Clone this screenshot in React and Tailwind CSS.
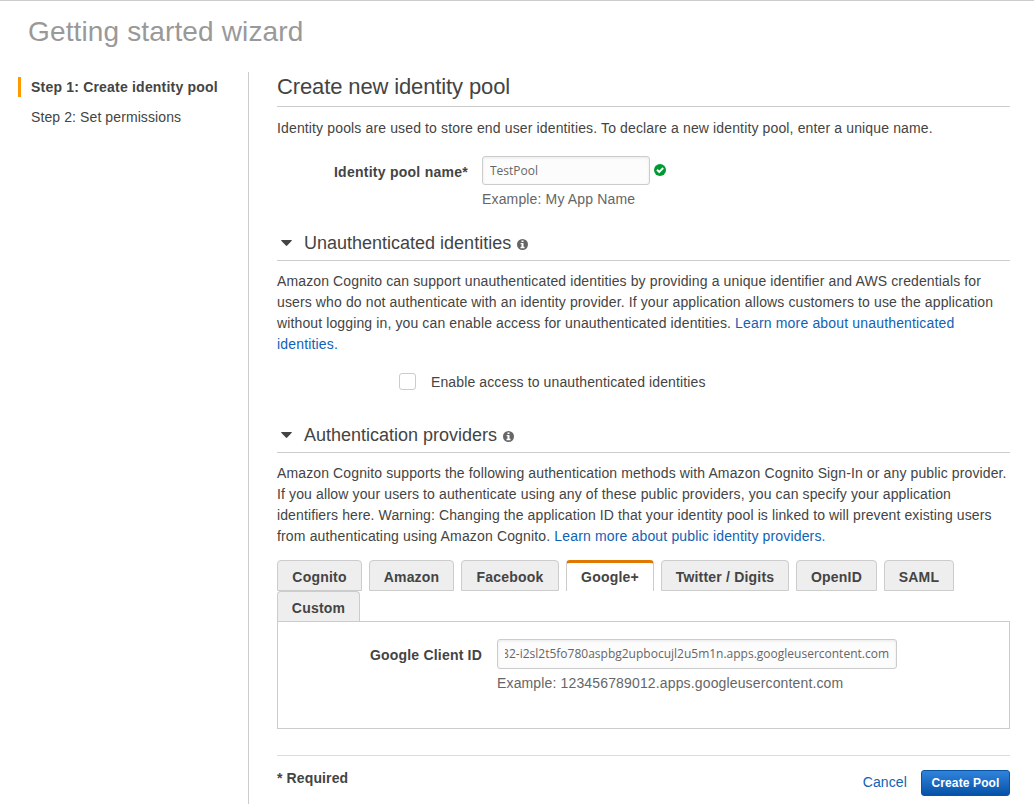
import React from 'react';

const TABS = [
  { label: 'Cognito', width: 'w-[85px]' },
  { label: 'Amazon', width: 'w-[85px]' },
  { label: 'Facebook', width: 'w-[98px]' },
  { label: 'Google+', width: 'w-[88px]', active: true },
  { label: 'Twitter / Digits', width: 'w-[128px]' },
  { label: 'OpenID', width: 'w-[81px]' },
  { label: 'SAML', width: 'w-[70px]' },
];

function InfoIcon() {
  return (
    <svg className="mt-[3px] ml-[6px] size-[11px]" viewBox="0 0 11 11">
      <circle cx="5.5" cy="5.5" r="5.5" fill="#666" />
      <path d="M4.5 1.4h2v1.7h-2zM3.6 4h2.9v3.8h1v1.4H3.5V7.8h1V5.3h-.9z" fill="#fff" />
    </svg>
  );
}

function SectionHeading({ children }) {
  return (
    <h3 className="flex h-[36px] items-center border-b border-[#ccc] text-[18px]">
      <svg className="mr-[12px] ml-[4px] h-[6px] w-[11px]" viewBox="0 0 11 6">
        <path d="M0 .6Q0 0 .8 0h9.4q.8 0 .8.6L6.2 5.6q-.7.6-1.4 0z" fill="#444" />
      </svg>
      <span className="pt-[2px] leading-[33px]">{children}</span>
      <InfoIcon />
    </h3>
  );
}

function Tab({ label, width, active }) {
  return active ? (
    <div className={`${width} h-[31px] rounded-t-[4px] border-x border-t-[3px] border-x-[#ccc] border-t-[#e07700] bg-white text-center leading-[28px]`}>
      {label}
    </div>
  ) : (
    <div className={`${width} h-[31px] rounded-t-[4px] border border-[#ccc] bg-[#eee] text-center leading-[32px]`}>
      {label}
    </div>
  );
}

function Field({ children, className }) {
  return (
    <div className={`${className} rounded-[3px] border border-[#ccc] bg-[#fcfcfc] px-[7px] font-['Open_Sans',sans-serif] text-[12px] tracking-normal text-[#666] shadow-[inset_0_1px_3px_rgba(0,0,0,0.08)]`}>
      <div className="flex h-full overflow-hidden whitespace-nowrap">{children}</div>
    </div>
  );
}

export default function App() {
  return (
    <div className="flex h-[804px] w-[1034px] flex-col overflow-hidden border-t border-[#ccc] bg-white font-['Liberation_Sans',Arial,sans-serif] text-[14px] leading-[21px] tracking-[0.122px] text-[#444]">
      <h1 className="h-[71px] shrink-0 pt-[10px] pl-[28px] text-[28px] leading-[42px] tracking-[0.14px] text-[#999]">Getting started wizard</h1>
      <div className="flex min-h-0 flex-1">
        <nav className="w-[248px] shrink-0 pt-[5px] pl-[18px]">
          <div className="h-[20px] border-l-[3px] border-[#f90] pl-[10px] leading-[20px] font-bold tracking-[0.2px]">Step 1: Create identity pool</div>
          <div className="mt-[10px] pl-[13px] leading-[20px] tracking-[0.1px]">Step 2: Set permissions</div>
        </nav>
        <main className="w-[762px] shrink-0 border-l border-[#ccc] pl-[28px]">
          <h2 className="h-[35px] border-b border-[#ccc] text-[22px] leading-[30px] tracking-[-0.125px]">Create new identity pool</h2>
          <p className="mt-[11px] tracking-[0.139px]">Identity pools are used to store end user identities. To declare a new identity pool, enter a unique name.</p>

          <div className="mt-[17px] flex">
            <label className="w-[191px] pt-[6px] text-right font-bold tracking-[0.26px]">Identity pool name*</label>
            <div className="ml-[14px]">
              <div className="flex items-center">
                <Field className="h-[29px] w-[168px] leading-[27px]">TestPool</Field>
                <svg className="mb-px ml-[4px] size-[12px]" viewBox="0 0 12 12">
                  <circle cx="6" cy="6" r="6" fill="#093" />
                  <path d="M3 5.8l2.2 2.1 4-3.9" fill="none" stroke="#fff" strokeWidth="1.9" />
                </svg>
              </div>
              <div className="mt-[4px] tracking-[0.15px] text-[#666]">Example: My App Name</div>
            </div>
          </div>

          <div className="mt-[15px] tracking-normal">
            <SectionHeading>Unauthenticated identities</SectionHeading>
          </div>
          <p className="mt-[10px]">
            Amazon Cognito can support unauthenticated identities by providing a unique identifier and AWS credentials for<br />
            users who do not authenticate with an identity provider. If your application allows customers to use the application<br />
            without logging in, you can enable access for unauthenticated identities. <a className="tracking-[0.165px] text-[#0f62b5]">Learn more about unauthenticated<br />identities.</a>
          </p>
          <div className="mt-[17px] flex h-[21px] items-center pl-[122px]">
            <div className="mb-[2px] size-[17px] rounded-[3px] border border-[#ccc] bg-white" />
            <span className="ml-[15px]">Enable access to unauthenticated identities</span>
          </div>

          <div className="mt-[24px] tracking-normal">
            <SectionHeading>Authentication providers</SectionHeading>
          </div>
          <p className="mt-[10px]">
            Amazon Cognito supports the following authentication methods with Amazon Cognito Sign-In or any public provider.<br />
            If you allow your users to authenticate using any of these public providers, you can specify your application<br />
            <span className="tracking-[0.111px]">identifiers here. Warning: Changing the application ID that your identity pool is linked to will prevent existing users</span><br />
            <span className="tracking-[0.155px]">from authenticating using Amazon Cognito. <a className="text-[#0f62b5]">Learn more about public identity providers.</a></span>
          </p>

          <div className="mt-[13px] flex gap-[7px] font-bold tracking-[0.2px]">
            {TABS.map((tab) => (
              <Tab key={tab.label} {...tab} />
            ))}
          </div>
          <div className="h-[30px] w-[83px] rounded-t-[4px] border border-b-0 border-[#ccc] bg-[#eee] text-center leading-[32px] font-bold tracking-[0.2px]">Custom</div>
          <div className="flex h-[108px] border border-[#ccc] pt-[17px]">
            <label className="w-[204px] pt-[6px] text-right font-bold tracking-[0.2px]">Google Client ID</label>
            <div className="ml-[15px]">
              <Field className="h-[30px] w-[400px] leading-[28px]">
                <span className="flex w-full justify-end">82-i2sl2t5fo780aspbg2upbocujl2u5m1n.apps.googleusercontent.com</span>
              </Field>
              <div className="mt-[4px] tracking-[0.146px] text-[#666]">Example: 123456789012.apps.googleusercontent.com</div>
            </div>
          </div>

          <footer className="mt-[26px] flex border-t border-[#ddd]">
            <div className="flex-1 pt-[12px] font-bold">* Required</div>
            <a className="pt-[16px] text-[#0f62b5]">Cancel</a>
            <button className="mt-[14px] ml-[14px] h-[26px] w-[89px] rounded-[3px] border border-[#0953a3] bg-linear-to-b from-[#2f83dc] to-[#0453a8] text-[12px] leading-[24px] font-bold text-white">Create Pool</button>
          </footer>
        </main>
      </div>
    </div>
  );
}
